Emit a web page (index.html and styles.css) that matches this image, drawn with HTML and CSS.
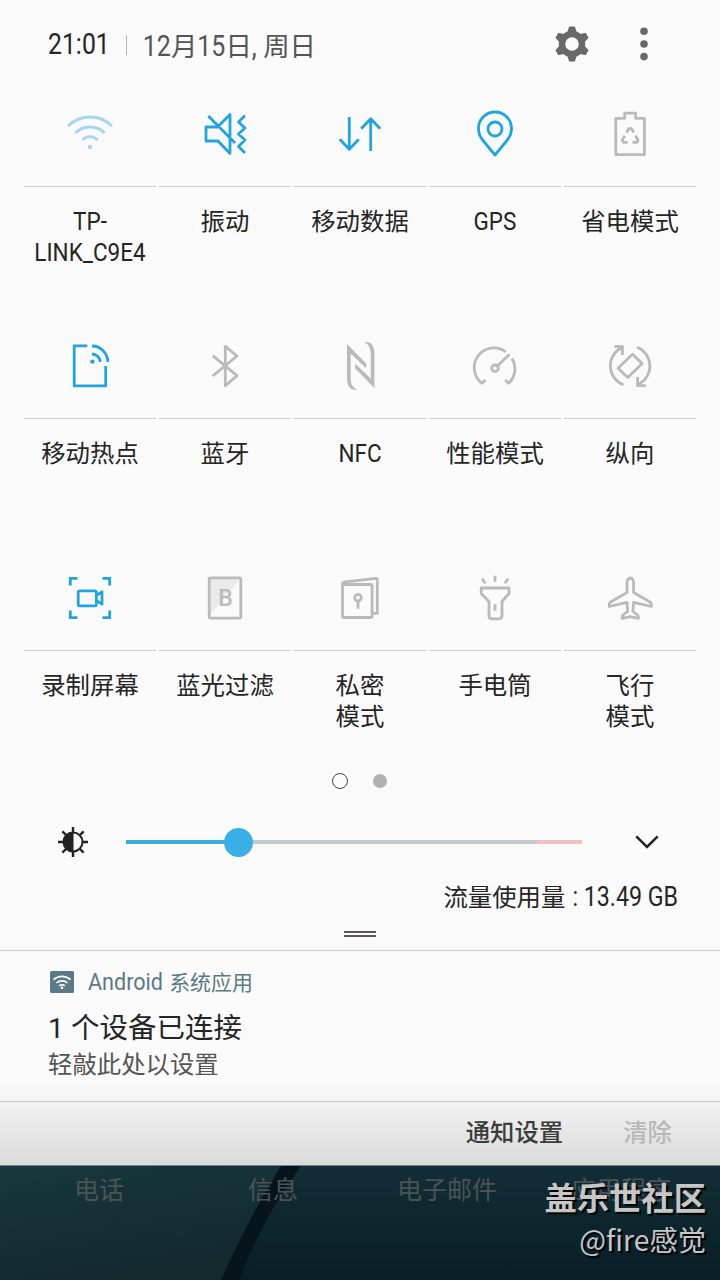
FILE: index.html
```html
<!DOCTYPE html>
<html lang="zh-CN">
<head>
  <meta charset="UTF-8">
  <meta name="viewport" content="width=device-width, initial-scale=1.0">
  <title>快速设置</title>
  <link rel="stylesheet" href="styles.css">
</head>
<body>

<div class="screen">
  <div class="panel">
    <div class="header">
      <span class="time latin">21:01</span>
      <span class="divider"></span>
      <span class="date"><span class="latin">12</span>月<span class="latin">15</span>日<span class="latin">,</span> 周日</span>
      <svg class="gear" viewBox="-18 -18 36 36">
        <circle r="10" fill="none" stroke="#686868" stroke-width="6.4"/>
        <g fill="#686868" stroke="#686868" stroke-width="1.5" stroke-linejoin="round">
          <path d="M-2.3-16.7H2.3L4-11.5H-4Z"/>
          <path transform="rotate(60)" d="M-2.3-16.7H2.3L4-11.5H-4Z"/>
          <path transform="rotate(120)" d="M-2.3-16.7H2.3L4-11.5H-4Z"/>
          <path transform="rotate(180)" d="M-2.3-16.7H2.3L4-11.5H-4Z"/>
          <path transform="rotate(240)" d="M-2.3-16.7H2.3L4-11.5H-4Z"/>
          <path transform="rotate(300)" d="M-2.3-16.7H2.3L4-11.5H-4Z"/>
        </g>
      </svg>
      <svg class="more" viewBox="0 0 8 36">
        <circle cx="4" cy="5.3" r="3.8"/>
        <circle cx="4" cy="18" r="3.8"/>
        <circle cx="4" cy="30.6" r="3.8"/>
      </svg>
    </div>

    <div class="tiles">
      <div class="tile on">
        <svg class="icon faded" viewBox="0 0 48 48">
          <path d="M2 16A31.4 31.4 0 0 1 46 16M9.3 23A21 21 0 0 1 38.7 23M16.5 30A10 10 0 0 1 31.5 30"/>
          <circle class="solid" cx="24" cy="37" r="2.2"/>
        </svg>
        <p class="label"><span class="latin">TP-</span><br><span class="latin">LINK_C9E4</span></p>
      </div>
      <div class="tile on">
        <svg class="icon" viewBox="0 0 48 48">
          <path d="M5 17H16.5L29 4.5V43.5L17 31H5ZM7.3 6L34 33M44 5.5L37.5 12L44 18L37.5 24L44 30L37.5 36.5L44 43"/>
        </svg>
        <p class="label">振动</p>
      </div>
      <div class="tile on">
        <svg class="icon" viewBox="0 0 48 48">
          <path d="M13.3 7V39.5M3.7 29.3L13.3 39.3L22.8 29.3M34.7 41V8.5M25.2 18.7L34.7 8.7L44.2 18.7"/>
        </svg>
        <p class="label">移动数据</p>
      </div>
      <div class="tile on">
        <svg class="icon" viewBox="0 0 48 48">
          <path d="M24 45L12 30.5C9.5 27.5 7.5 23.5 7.5 18.5A16.5 16.5 0 0 1 40.5 18.5C40.5 23.5 38.5 27.5 36 30.5Z"/>
          <circle cx="24" cy="19" r="7"/>
        </svg>
        <p class="label"><span class="latin">GPS</span></p>
      </div>
      <div class="tile">
        <svg class="icon" viewBox="0 0 48 48">
          <path d="M9.8 8.3H18.7V3.2H29.6V8.3H38.4V44.7H9.8Z"/>
          <path d="M20.7 22.5L22.7 18.6H25.6L27.7 22.5M18.7 25.7L16.2 30.5L17.3 32.3H21.7M29.5 25.7L32 30.5L31 32.3H26.5"/>
        </svg>
        <p class="label">省电模式</p>
      </div>

      <div class="tile on">
        <svg class="icon" viewBox="0 0 48 48">
          <path d="M21.3 3.8H8.2V43.8H39.7V24M26 4A16 16 0 0 1 41.8 20M26 12A8.5 8.5 0 0 1 34.3 20"/>
          <circle class="solid" cx="26.4" cy="19.6" r="2.2"/>
        </svg>
        <p class="label">移动热点</p>
      </div>
      <div class="tile">
        <svg class="icon" viewBox="0 0 48 48">
          <path d="M11.7 13.7L36 33.7L24.3 43.8V4.3L36 14L11.7 34"/>
        </svg>
        <p class="label">蓝牙</p>
      </div>
      <div class="tile">
        <svg class="icon" viewBox="0 0 48 48">
          <path class="solid" d="M11 2L30.2 21.5V26.2L14.6 11.5V36C14.6 42 17 46 21.3 47.7H17C13 46.5 11 42 11 36Z"/>
          <path class="solid" transform="rotate(180 24.7 24)" d="M11 2L30.2 21.5V26.2L14.6 11.5V36C14.6 42 17 46 21.3 47.7H17C13 46.5 11 42 11 36Z"/>
        </svg>
        <p class="label"><span class="latin">NFC</span></p>
      </div>
      <div class="tile">
        <svg class="icon" viewBox="0 0 48 48">
          <path d="M14.5 38L11 41.3A19.6 19.6 0 0 1 34.8 10M41 16.5A19.6 19.6 0 0 1 37.6 41.3L34.2 38M26.7 23.7L38.5 12.3"/>
          <circle cx="24" cy="26.3" r="3.3"/>
        </svg>
        <p class="label">性能模式</p>
      </div>
      <div class="tile">
        <svg class="icon" viewBox="0 0 48 48">
          <path d="M17.5 42.8A20.2 20.2 0 0 1 15.5 5.8M8.3 4.4H16.4V13M31 5.2A20.2 20.2 0 0 1 32.5 42.2M39.7 43.6H31.6V35"/>
          <path d="M26.5 12.3L36.2 21.6L21.7 35.5L12 26.2Z"/>
        </svg>
        <p class="label">纵向</p>
      </div>

      <div class="tile on">
        <svg class="icon" viewBox="0 0 48 48">
          <path class="sharp" d="M4.3 11.5V4.3H11.5M36.5 4.3H43.7V11.5M43.7 36.5V43.7H36.5M11.5 43.7H4.3V36.5"/>
          <rect x="12.2" y="16.8" width="18.2" height="15" rx="1.5"/>
          <path d="M31 21.2L36 17.8V30.2L31 26.8"/>
        </svg>
        <p class="label">录制屏幕</p>
      </div>
      <div class="tile">
        <svg class="icon" viewBox="0 0 48 48">
          <path class="shade" d="M8 4H40L8 42Z"/>
          <rect x="8.2" y="3.9" width="31.6" height="40.2" rx="1"/>
          <text class="letter" x="24.4" y="32.3">B</text>
        </svg>
        <p class="label">蓝光过滤</p>
      </div>
      <div class="tile">
        <svg class="icon" viewBox="0 0 48 48">
          <rect x="6.5" y="10.5" width="29.6" height="33" rx="1"/>
          <path d="M6.5 10.3C6.5 8.8 7.5 8 9 7.9L40.2 4.3Q41.3 4.2 41.3 5.3V39.3H37"/>
          <circle cx="22" cy="23.7" r="3.3"/>
          <path d="M22 27V34.7"/>
        </svg>
        <p class="label">私密<br>模式</p>
      </div>
      <div class="tile">
        <svg class="icon" viewBox="0 0 48 48">
          <path d="M10.2 14H38V19.5L31 27.5V41.5Q31 44.8 27.7 44.8H21.3Q18 44.8 18 41.5V27.5L10.2 19.5ZM24 30.3V36.7M24 1.7V7.7M11 4.7L14.3 9.3M37.2 4.7L33.9 9.3"/>
        </svg>
        <p class="label">手电筒</p>
      </div>
      <div class="tile">
        <svg class="icon" viewBox="0 0 48 48">
          <path d="M24.3 4C22.2 4 21.2 6.5 21 9V18.5L4.5 28Q3 29 3.2 32.5L21 28.3L21.7 37.5L17 41Q15.8 42 16.2 44.3L24.3 42.6L32.4 44.3Q32.8 42 31.6 41L26.9 37.5L27.6 28.3L45.4 32.5Q45.6 29 44.1 28L27.6 18.5V9C27.4 6.5 26.4 4 24.3 4Z"/>
        </svg>
        <p class="label">飞行<br>模式</p>
      </div>
    </div>

    <div class="pager">
      <span class="page current"></span>
      <span class="page"></span>
    </div>

    <div class="brightness">
      <svg class="sun" viewBox="-15 -15 30 30">
        <circle r="9.5" fill="none" stroke="#222" stroke-width="2"/>
        <path d="M0.5-10A10 10 0 0 0 0.5 10Z" fill="#222"/>
        <path d="M0-15V-10M0 10V15M-15 0H-10M10 0H15M-10.6-10.6L-7-7M7 7L10.6 10.6M-10.6 10.6L-7 7M7-7L10.6-10.6" stroke="#222" stroke-width="2.4"/>
      </svg>
      <div class="slider">
        <span class="filled"></span>
        <span class="knob"></span>
        <span class="rest"></span>
        <span class="high"></span>
      </div>
      <svg class="chevron" viewBox="0 0 24 14">
        <path d="M1.3 1.3L12 12L22.7 1.3"/>
      </svg>
    </div>

    <p class="usage">流量使用量 <span class="latin">: 13.49 GB</span></p>
    <div class="handle"></div>
  </div>

  <div class="notification">
    <div class="app">
      <svg class="app-icon" viewBox="0 0 24 22">
        <rect width="24" height="22" rx="1.5" fill="#5b7986"/>
        <path d="M3.5 8.7A12.5 12.5 0 0 1 20.5 8.7M6.5 12A8 8 0 0 1 17.5 12M9.2 15A4 4 0 0 1 14.8 15" fill="none" stroke="#fff" stroke-width="1.7"/>
        <circle cx="12" cy="16.8" r="1.3" fill="#fff"/>
      </svg>
      <span class="app-name"><span class="latin">Android</span> 系统应用</span>
    </div>
    <p class="title">1 个设备已连接</p>
    <p class="text">轻敲此处以设置</p>
  </div>

  <div class="actions">
    <span class="action">通知设置</span>
    <span class="action disabled">清除</span>
  </div>

  <div class="dock">
    <svg class="wallpaper" viewBox="0 0 720 115" preserveAspectRatio="none">
      <defs>
        <linearGradient id="left" x1="0" y1="0" x2="0.4" y2="1">
          <stop offset="0" stop-color="#17383c"/>
          <stop offset="1" stop-color="#12292e"/>
        </linearGradient>
        <linearGradient id="right" x1="0" y1="0" x2="0" y2="1">
          <stop offset="0" stop-color="#122e36"/>
          <stop offset="1" stop-color="#081e26"/>
        </linearGradient>
      </defs>
      <rect width="720" height="115" fill="url(#right)"/>
      <path d="M0 0H281Q250 50 221 115H0Z" fill="url(#left)"/>
      <path d="M281 0H301Q264 50 239 115H221Q250 50 281 0Z" fill="#06151c"/>
    </svg>
    <span class="dock-label">电话</span>
    <span class="dock-label">信息</span>
    <span class="dock-label">电子邮件</span>
    <span class="dock-label">应用程序</span>
    <div class="watermark">
      <p class="site">盖乐世社区</p>
      <p class="author">@fire感觉</p>
    </div>
  </div>
</div>

</body>
</html>
```
FILE: styles.css
```css
* {
  box-sizing: border-box;
}

body {
  margin: 0;
  font-family: Roboto, "Noto Sans CJK SC", sans-serif;
  color: #252525;
}

p {
  margin: 0;
}

.screen {
  width: 720px;
  height: 1280px;
  display: flex;
  flex-direction: column;
  background-color: #fafafa;
  overflow: hidden;
}

/* condensed look for latin text */
.latin {
  display: inline-block;
  transform: scaleY(1.16);
  transform-origin: 50% 72%;
}

.panel {
  height: 951px;
  border-bottom: 1px solid #cdcdcd;
  box-shadow: 0 1px 2px rgba(0, 0, 0, 0.1);
}

.header {
  display: flex;
  align-items: center;
  height: 88px;
  padding: 0 72px 0 48px;
}

.time {
  margin-top: 3px;
  font-size: 24.8px;
}

.divider {
  width: 1px;
  height: 20px;
  margin: 2px 16px 0 16px;
  background-color: #b4b4b4;
}

.date {
  font-size: 26.4px;
  color: #555;
  white-space: nowrap;
}

.date .latin {
  font-size: 25px;
}

.gear {
  width: 36px;
  height: 36px;
  margin-left: auto;
}

.more {
  width: 8px;
  height: 36px;
  margin-left: 50px;
  fill: #686868;
}

.tiles {
  display: grid;
  grid-template-columns: repeat(5, 132px);
  grid-template-rows: 232px 232px 212px;
  column-gap: 3px;
  padding: 0 24px;
}

.tile {
  padding-top: 22px;
  text-align: center;
  color: #bababa;
}

.tile.on {
  color: #1fa5e2;
}

.icon {
  display: block;
  width: 48px;
  height: 48px;
  margin: 0 auto;
  overflow: visible;
  fill: none;
  stroke: currentColor;
  stroke-width: 2.8;
  stroke-linejoin: round;
}

.faded {
  opacity: 0.4;
}

.solid {
  fill: currentColor;
  stroke: none;
}

.sharp {
  stroke-linejoin: miter;
}

.shade {
  fill: #eaeaea;
  stroke: none;
}

.letter {
  font-size: 23px;
  font-weight: 500;
  text-anchor: middle;
  fill: currentColor;
  stroke: none;
}

.label {
  margin-top: 28px;
  padding-top: 19px;
  border-top: 1px solid #cbcbcb;
  font-size: 24.4px;
  line-height: 31px;
  color: #252525;
}

.label .latin {
  font-size: 22.5px;
  line-height: 28px;
}

.pager {
  display: flex;
  justify-content: center;
  align-items: center;
  gap: 25px;
  height: 34px;
  padding-right: 1px;
}

.page {
  width: 14px;
  height: 14px;
  border-radius: 50%;
  background-color: #b1b1b1;
}

.page.current {
  width: 16px;
  height: 16px;
  border: 1.5px solid #444;
  background-color: transparent;
}

.brightness {
  display: flex;
  align-items: center;
  height: 88px;
  padding: 0 61px 0 58px;
}

.sun {
  width: 30px;
  height: 30px;
}

.slider {
  display: flex;
  align-items: center;
  width: 456px;
  margin-left: 38px;
}

.filled {
  width: 98px;
  height: 4px;
  background-color: #40abd9;
}

.knob {
  width: 29px;
  height: 29px;
  border-radius: 50%;
  background-color: #38afe6;
}

.rest {
  flex: 1;
  height: 4px;
  background-color: #c3cacd;
}

.high {
  width: 45px;
  height: 4px;
  background-color: #f1bfbd;
}

.chevron {
  width: 24px;
  height: 14px;
  margin-left: auto;
  fill: none;
  stroke: #222;
  stroke-width: 2.5;
}

.usage {
  height: 45px;
  padding-right: 42px;
  font-size: 24.4px;
  line-height: 24px;
  text-align: right;
}

.usage .latin {
  margin-left: 1px;
  font-size: 23.2px;
}

.handle {
  width: 32px;
  height: 6px;
  margin: 0 auto;
  border: solid #5c585c;
  border-width: 2px 0;
}

.notification {
  height: 150px;
  padding: 15px 48px 0;
  background: linear-gradient(#fafafa 130px, #f3f3f3);
}

.app {
  display: flex;
  align-items: center;
  height: 31px;
  padding-left: 2px;
  color: #5b7986;
}

.app-icon {
  width: 24px;
  height: 22px;
}

.app-name {
  margin: -2px 0 0 14px;
  font-size: 20.9px;
}

.app-name .latin {
  margin-right: 1px;
  font-size: 21.6px;
  transform: scaleY(1.08);
}

.title {
  height: 42px;
  font-size: 28.5px;
  line-height: 64px;
}

.text {
  font-size: 24.4px;
  line-height: 52px;
  color: #555;
}

.actions {
  display: flex;
  justify-content: flex-end;
  gap: 60px;
  height: 65px;
  padding: 0 48px;
  border-top: 1px solid #c4c4c4;
  border-bottom: 1px solid #6f8583;
  background: linear-gradient(#f2f2f2, #dadada);
  font-size: 24.4px;
  font-weight: 500;
  line-height: 62px;
  color: #3c3c3c;
}

.disabled {
  color: #b8b8b8;
}

.dock {
  position: relative;
  display: grid;
  grid-template-columns: repeat(4, 174px);
  height: 114px;
  padding-left: 12px;
}

.wallpaper {
  position: absolute;
  top: 0;
  left: 0;
  width: 720px;
  height: 114px;
}

.dock-label {
  position: relative;
  font-size: 25px;
  line-height: 50px;
  text-align: center;
  color: #4a5456;
}

.watermark {
  position: absolute;
  top: 10px;
  right: 14px;
  text-align: right;
  color: #c6c6c6;
  text-shadow: 2px 2px 1px #000;
}

.site {
  font-size: 32.3px;
  font-weight: 700;
  line-height: 46px;
}

.author {
  font-family: "Noto Sans CJK SC", sans-serif;
  font-size: 28.3px;
  line-height: 34px;
}
```
